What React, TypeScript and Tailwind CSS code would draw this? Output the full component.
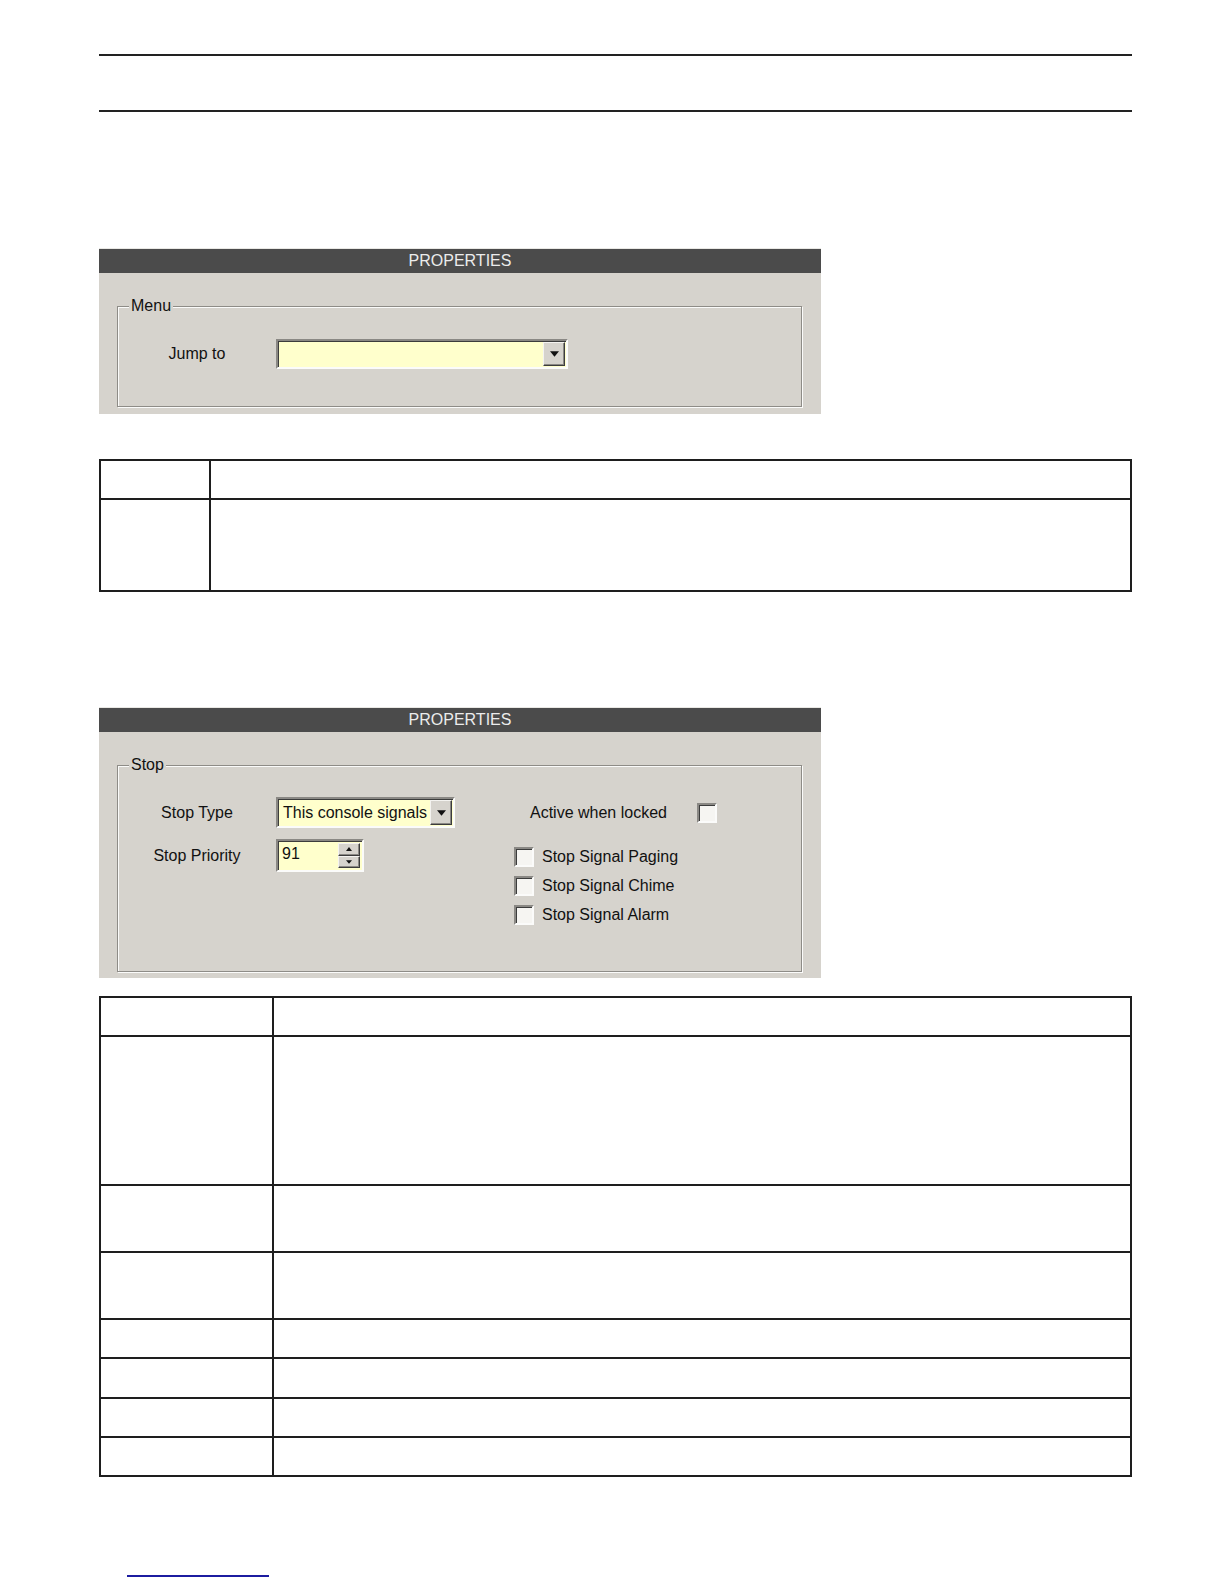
import React from "react";

const sunken =
  "border-2 border-t-[#8a8884] border-l-[#8a8884] border-b-[#fbfbfa] border-r-[#fbfbfa] shadow-[inset_1px_1px_0_#3c3c3c]";
const raised =
  "bg-[#d6d3cd] border border-t-[#f4f3f0] border-l-[#f4f3f0] border-b-[#3c3c3c] border-r-[#3c3c3c] shadow-[inset_-1px_-1px_0_#8a8884]";

function DownArrow({ size = 9 }: { size?: number }) {
  return (
    <svg width={size} height={Math.ceil(size / 2) + 1} viewBox="0 0 10 6">
      <polygon points="0,0 10,0 5,6" fill="#111" />
    </svg>
  );
}

function UpArrow() {
  return (
    <svg width={6} height={4} viewBox="0 0 6 4">
      <polygon points="0,4 6,4 3,0" fill="#111" />
    </svg>
  );
}

function Combo({ width, height, text }: { width: string; height: string; text?: string }) {
  return (
    <div className={`${width} ${height} ${sunken} bg-[#ffffcc] flex items-stretch`}>
      <div className="flex-1 pl-[5px] flex items-center text-[16px] leading-none text-[#111] whitespace-nowrap overflow-hidden">
        {text}
      </div>
      <div className={`${raised} w-[22px] my-[1px] mr-[1px] flex items-center justify-center`}>
        <DownArrow />
      </div>
    </div>
  );
}

function Spin({ value }: { value: string }) {
  return (
    <div className={`w-[88px] h-[33px] ${sunken} bg-[#ffffcc] flex items-stretch`}>
      <div className="flex-1 pl-[4px] pt-[3px] text-[16px] leading-[20px] text-[#111]">{value}</div>
      <div className="w-[22px] mr-[2px] my-[2px] flex flex-col">
        <div className={`${raised} flex-1 flex items-center justify-center`}>
          <UpArrow />
        </div>
        <div className={`${raised} flex-1 flex items-center justify-center`}>
          <DownArrow size={6} />
        </div>
      </div>
    </div>
  );
}

function Checkbox() {
  return <div className={`w-[20px] h-[20px] ${sunken} bg-[#f6f5f2]`} />;
}

function GroupBox({
  legend,
  height,
  children,
}: {
  legend: string;
  height: string;
  children: React.ReactNode;
}) {
  return (
    <div
      className={`relative ${height} border border-[#8e8c87] shadow-[inset_1px_1px_0_#fbfbfa,1px_1px_0_#fbfbfa]`}
    >
      <span className="absolute -top-[11px] left-[11px] px-[2px] bg-[#d6d3cd] text-[16px] leading-[20px] text-[#111]">
        {legend}
      </span>
      {children}
    </div>
  );
}

function Panel({ height, children }: { height: string; children: React.ReactNode }) {
  return (
    <div className={`w-[722px] ${height} bg-[#d6d3cd] border-t border-[#e9e8e4] flex flex-col`}>
      <div className="h-[24px] bg-[#4b4b4b] flex items-center justify-center">
        <span className="text-[16px] text-[#ececec] leading-none">PROPERTIES</span>
      </div>
      <div className="pt-[33px] pl-[18px] pr-[19px]">{children}</div>
    </div>
  );
}

function Table({ colWidth, rows }: { colWidth: string; rows: string[] }) {
  return (
    <div className="border-2 border-[#1e1e1e]">
      {rows.map((h, i) => (
        <div key={i} className={i > 0 ? "border-t-2 border-[#1e1e1e]" : ""}>
          <div className={`flex ${h}`}>
            <div className={`${colWidth} border-r-2 border-[#1e1e1e]`} />
            <div className="flex-1" />
          </div>
        </div>
      ))}
    </div>
  );
}

export default function App() {
  return (
    <div
      className="min-h-[1584px] bg-white pt-[54px]"
      style={{ fontFamily: '"Liberation Sans", Arial, sans-serif' }}
    >
      <div className="ml-[99px] w-[1033px]">
        <div className="h-[2px] bg-[#222]" />
        <div className="mt-[54px] h-[2px] bg-[#222]" />

        {/* MENU PANEL */}
        <div className="mt-[136px]">
          <Panel height="h-[166px]">
            <GroupBox legend="Menu" height="h-[101px]">
              <div className="pt-[32px] pl-[19px] flex items-center gap-[19px]">
                <div className="w-[120px] text-center text-[16px] text-[#111]">Jump to</div>
                <Combo width="w-[292px]" height="h-[30px]" />
              </div>
            </GroupBox>
          </Panel>
        </div>

        <div className="mt-[45px]">
          <Table colWidth="w-[110px]" rows={["h-[37px]", "h-[90px]"]} />
        </div>

        {/* STOP PANEL */}
        <div className="mt-[115px]">
          <Panel height="h-[271px]">
            <GroupBox legend="Stop" height="h-[207px]">
              <div className="pt-[31px] flex">
                <div className="w-[337px] pl-[19px] flex flex-col gap-[11px]">
                  <div className="flex items-center gap-[19px]">
                    <div className="w-[120px] text-center text-[16px] text-[#111]">Stop Type</div>
                    <Combo width="w-[179px]" height="h-[31px]" text="This console signals" />
                  </div>
                  <div className="flex items-center gap-[19px]">
                    <div className="w-[120px] text-center text-[16px] text-[#111]">Stop Priority</div>
                    <Spin value="91" />
                  </div>
                </div>
                <div className="ml-[59px] flex flex-col">
                  <div className="h-[31px] pl-[16px] flex items-center gap-[30px] text-[16px] text-[#111]">
                    <span>Active when locked</span>
                    <Checkbox />
                  </div>
                  <div className="mt-[14px] flex flex-col">
                    {["Stop Signal Paging", "Stop Signal Chime", "Stop Signal Alarm"].map((l) => (
                      <div key={l} className="h-[29px] flex items-center gap-[8px] text-[16px] text-[#111]">
                        <Checkbox />
                        <span>{l}</span>
                      </div>
                    ))}
                  </div>
                </div>
              </div>
            </GroupBox>
          </Panel>
        </div>

        <div className="mt-[18px]">
          <Table
            colWidth="w-[173px]"
            rows={[
              "h-[37px]",
              "h-[147px]",
              "h-[65px]",
              "h-[65px]",
              "h-[37px]",
              "h-[38px]",
              "h-[37px]",
              "h-[37px]",
            ]}
          />
        </div>

        <div className="mt-[98px] ml-[28px] w-[142px] h-[2px] bg-[#1c1ca0]" />
      </div>
    </div>
  );
}
